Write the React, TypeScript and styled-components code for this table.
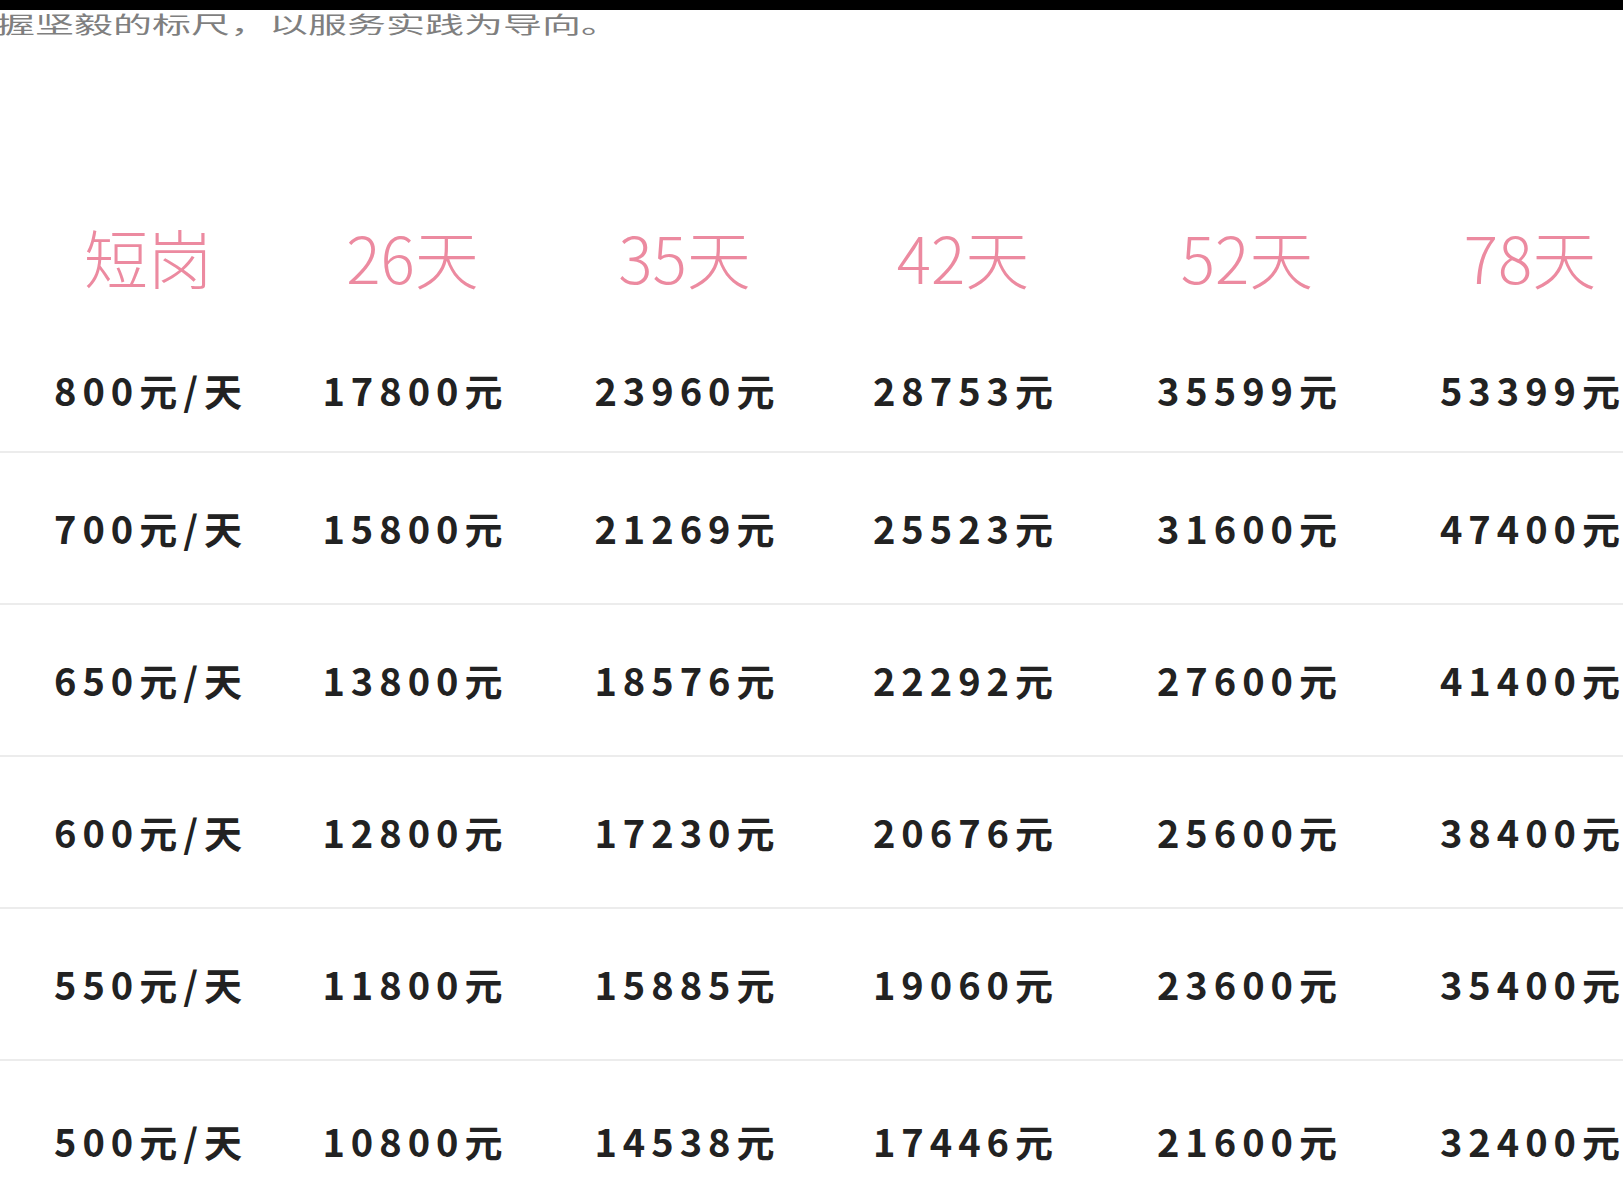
import styled, { createGlobalStyle } from 'styled-components';

const GlobalStyle = createGlobalStyle`
  html, body {
    margin: 0;
    padding: 0;
    background: #ffffff;
    overflow: hidden;
  }
`;

const Page = styled.div`
  width: 1623px;
  height: 1180px;
  overflow: hidden;
  background: #ffffff;
  font-family: 'Noto Sans CJK SC', 'Noto Sans', sans-serif;
`;

const TopBar = styled.div`
  height: 10px;
  background: #000000;
`;

const Intro = styled.div`
  height: 172px;
  overflow: hidden;
`;

const IntroText = styled.p`
  margin: 2px 0 0 -4px;
  font-size: 39px;
  line-height: 39px;
  color: #7f7f7f;
  white-space: nowrap;
  transform: scaleY(0.58);
  transform-origin: top left;
`;

const Grid = styled.div`
  display: grid;
  grid-template-columns: 260px 269px 275px 282px 286px 280px;
  padding-left: 18px;
  width: 1652px;
`;

const HeaderRow = styled(Grid)`
  height: 147px;
  align-items: center;
`;

const HeaderCell = styled.div`
  text-align: center;
  font-size: 64px;
  font-weight: 300;
  color: #ec8aa0;
  white-space: nowrap;
  line-height: 1;
`;

const Row = styled(Grid)<{ $short?: boolean }>`
  height: ${(p) => (p.$short ? '122px' : '150px')};
  align-items: center;
  border-bottom: 2px solid #ececec;
  &:last-child {
    border-bottom: none;
    height: 160px;
  }
`;

const Cell = styled.div`
  text-align: center;
  font-size: 38px;
  font-weight: 700;
  letter-spacing: 6px;
  padding-left: 6px;
  color: #222222;
  white-space: nowrap;
  line-height: 1;
`;

const headers = ['短岗', '26天', '35天', '42天', '52天', '78天'];

const rows = [
  ['800元/天', '17800元', '23960元', '28753元', '35599元', '53399元'],
  ['700元/天', '15800元', '21269元', '25523元', '31600元', '47400元'],
  ['650元/天', '13800元', '18576元', '22292元', '27600元', '41400元'],
  ['600元/天', '12800元', '17230元', '20676元', '25600元', '38400元'],
  ['550元/天', '11800元', '15885元', '19060元', '23600元', '35400元'],
  ['500元/天', '10800元', '14538元', '17446元', '21600元', '32400元'],
];

export default function App() {
  return (
    <Page>
      <GlobalStyle />
      <TopBar />
      <Intro>
        <IntroText>握坚毅的标尺，以服务实践为导向。</IntroText>
      </Intro>
      <HeaderRow>
        {headers.map((h) => (
          <HeaderCell key={h}>{h}</HeaderCell>
        ))}
      </HeaderRow>
      {rows.map((r, i) => (
        <Row key={r[0]} $short={i === 0}>
          {r.map((c) => (
            <Cell key={c}>{c}</Cell>
          ))}
        </Row>
      ))}
    </Page>
  );
}
